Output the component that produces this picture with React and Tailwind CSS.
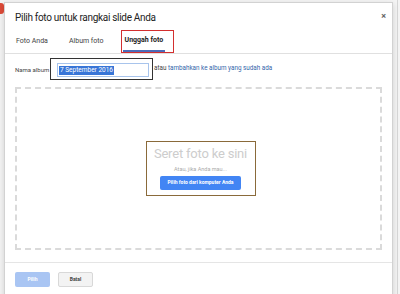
export default function App() {
  return (
    <div
      className="relative w-[400px] h-[294px] overflow-hidden bg-[#f4f4f4] pl-[4px] pt-[2px]"
      style={{ fontFamily: "Roboto, 'Liberation Sans', Arial, sans-serif" }}
    >
      {/* bits of the page behind the dialog */}
      <div className="absolute left-0 top-[3px] w-[4px] h-[11px] rounded-r-[3px] bg-[#dd4b39]" />
      <div className="absolute right-[2px] top-0 w-px h-full bg-[#d6d6d6]" />

      <div className="relative w-[389px] h-[300px] bg-white border border-[#d2d2d2] shadow-[0_2px_6px_rgba(0,0,0,0.15)] flex flex-col whitespace-nowrap">
        {/* header */}
        <div className="flex items-center justify-between h-[27px] pl-[10px] pr-[6px]">
          <h1 className="text-[10px] tracking-[-0.3px] text-[#222] leading-none pt-[2px]">
            Pilih foto untuk rangkai slide Anda
          </h1>
          <span className="text-[9px] text-[#666] leading-none font-bold">×</span>
        </div>

        {/* tabs */}
        <div className="flex items-stretch h-[24px] border-b border-[#e0e0e0] pl-[8px]">
          <div className="flex items-center px-[3px] text-[7px] text-[#444]">Foto Anda</div>
          <div className="flex items-center ml-[15px] px-[3px] text-[7px] text-[#444]">Album foto</div>
          <div className="ml-[14px] w-[53px] border border-[#d32f2f] flex flex-col items-start">
            <div className="flex-1 flex items-center pl-[3px] text-[7px] font-bold text-[#222]">
              Unggah foto
            </div>
            <div className="ml-[1px] w-[42px] h-[2px] bg-[#4d6bb8]" />
          </div>
        </div>

        {/* album name row */}
        <div className="flex items-center h-[22px] mt-[4px] pl-[10px]">
          <span className="text-[6px] text-[#444] w-[35px]">Nama album</span>
          <div className="w-[103px] h-[22px] border border-[#333] bg-white pl-[6px] pt-[4px]">
            <div className="w-[92px] h-[14px] border border-[#a8c4ec] flex items-center pl-[1px]">
              <span className="text-[6.5px] text-white bg-[#3875d7] leading-[9px] px-[1px]">
                7 September 2016
              </span>
            </div>
          </div>
          <span className="ml-[1px] text-[6.3px] text-[#444]">
            atau <span className="text-[#3366aa]">tambahkan ke album yang sudah ada</span>
          </span>
        </div>

        {/* drop zone */}
        <div className="mx-[10px] mt-[7px] h-[163px] border-2 border-dashed border-[#dadada] flex items-center justify-center">
          <div className="w-[110px] h-[55px] border border-[#8a6a3a] flex flex-col items-center pt-[4px] ml-[4px]">
            <span className="text-[13px] tracking-[-0.2px] text-[#cdcdcd] leading-[16px]">
              Seret foto ke sini
            </span>
            <span className="mt-[5px] text-[5.5px] text-[#aaa] leading-none">Atau, jika Anda mau...</span>
            <button className="mt-[3px] w-[81px] h-[14px] bg-[#4285f4] rounded-[2px] text-[5px] text-white font-bold leading-none">
              Pilih foto dari komputer Anda
            </button>
          </div>
        </div>

        {/* footer */}
        <div className="mt-[12px] border-t border-[#e5e5e5] pt-[9px] pl-[10px] flex gap-[8px]">
          <button className="w-[35px] h-[15px] bg-[#a9c5f3] rounded-[2px] text-[5px] text-white font-bold">
            Pilih
          </button>
          <button className="w-[35px] h-[15px] bg-[#f3f3f3] border border-[#d8d8d8] rounded-[2px] text-[5px] text-[#444] font-bold">
            Batal
          </button>
        </div>
      </div>
    </div>
  );
}
